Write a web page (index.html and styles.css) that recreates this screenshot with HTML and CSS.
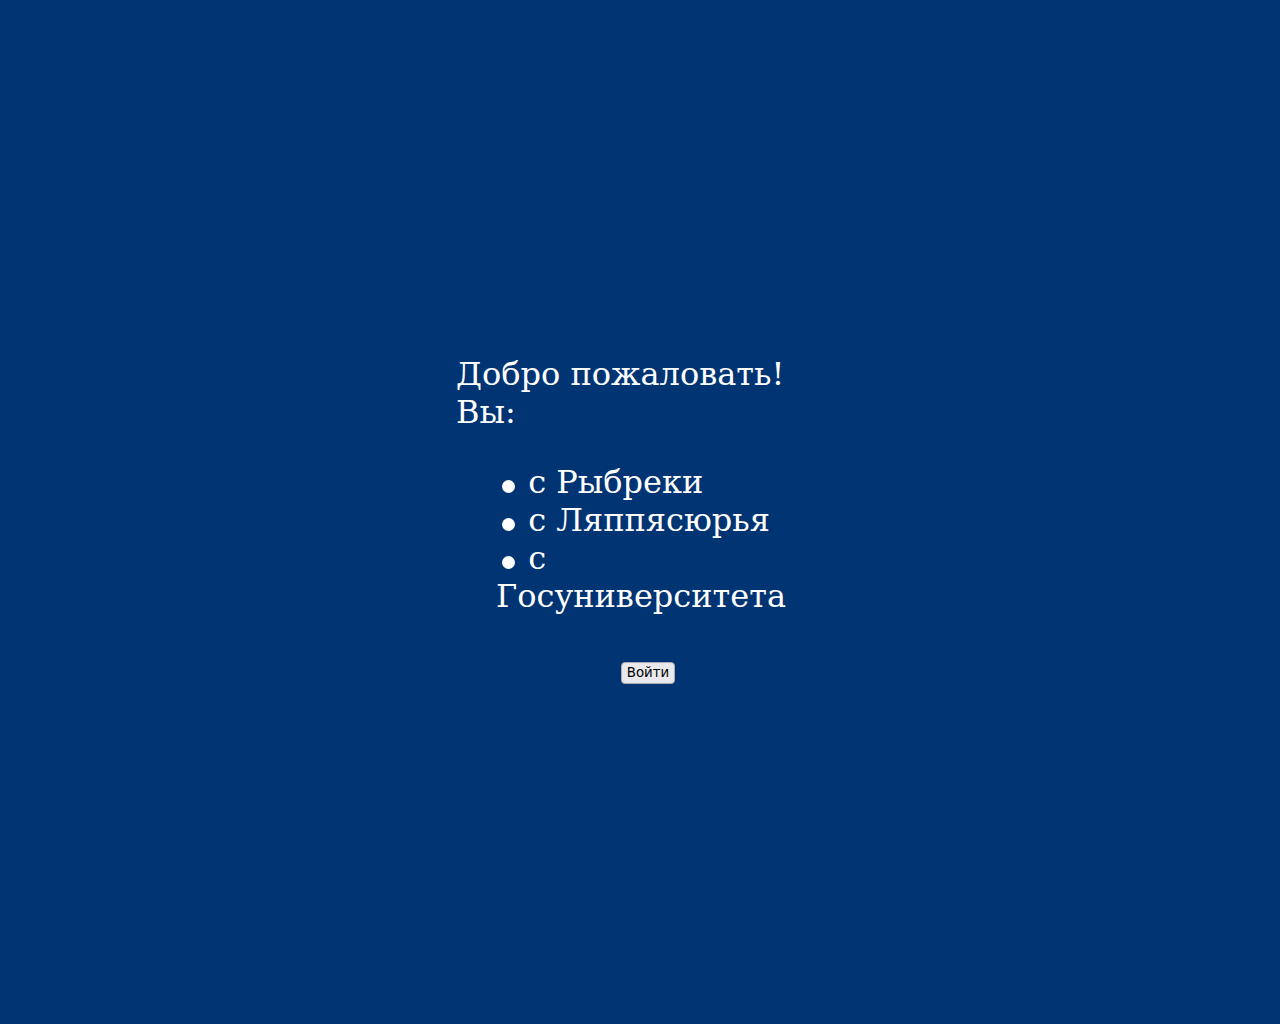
FILE: index.html
```html
<!DOCTYPE html>
<html lang="ru">
<head>
<meta charset="utf-8">
<title>Добро пожаловать</title>
<link rel="stylesheet" href="styles.css">
</head>
<body>
<div class="page">
  <form class="login">
    <div class="greeting">Добро пожаловать!<br>Вы:</div>
    <ul class="choices">
      <li><input type="radio" name="from" class="radio"> с Рыбреки</li>
      <li><input type="radio" name="from" class="radio"> с Ляппясюрья</li>
      <li><input type="radio" name="from" class="radio"> с Госуниверситета</li>
    </ul>
    <div class="actions"><button type="submit" class="submit">Войти</button></div>
  </form>
</div>
</body>
</html>
```

FILE: styles.css
```css
html, body {
  margin: 0;
  padding: 0;
  background: #003473;
}

.page {
  box-sizing: border-box;
  width: 1280px;
  height: 1024px;
  padding: 16px 0 0 14px;
  display: flex;
  align-items: center;
  justify-content: center;
}

.login {
  width: 382px;
  font-family: "DejaVu Serif", serif;
  font-size: 32px;
  color: #ffffff;
  margin: 0;
}

.choices {
  margin: 32px 0;
  padding-left: 40px;
  list-style: none;
}

.radio {
  -webkit-appearance: none;
  appearance: none;
  width: 13px;
  height: 13px;
  margin: 3px 3px 0 6px;
  border: none;
  border-radius: 50%;
  background: #ffffff;
  vertical-align: baseline;
}

.actions {
  text-align: center;
  padding-left: 2px;
}

.submit {
  font-family: "DejaVu Sans", sans-serif;
  font-size: 13.33px;
  color: #000000;
  background: #e9e9ed;
  border: 1px solid #a9a9b3;
  border-radius: 4px;
  padding: 2px 5px;
  line-height: 16px;
}
```
